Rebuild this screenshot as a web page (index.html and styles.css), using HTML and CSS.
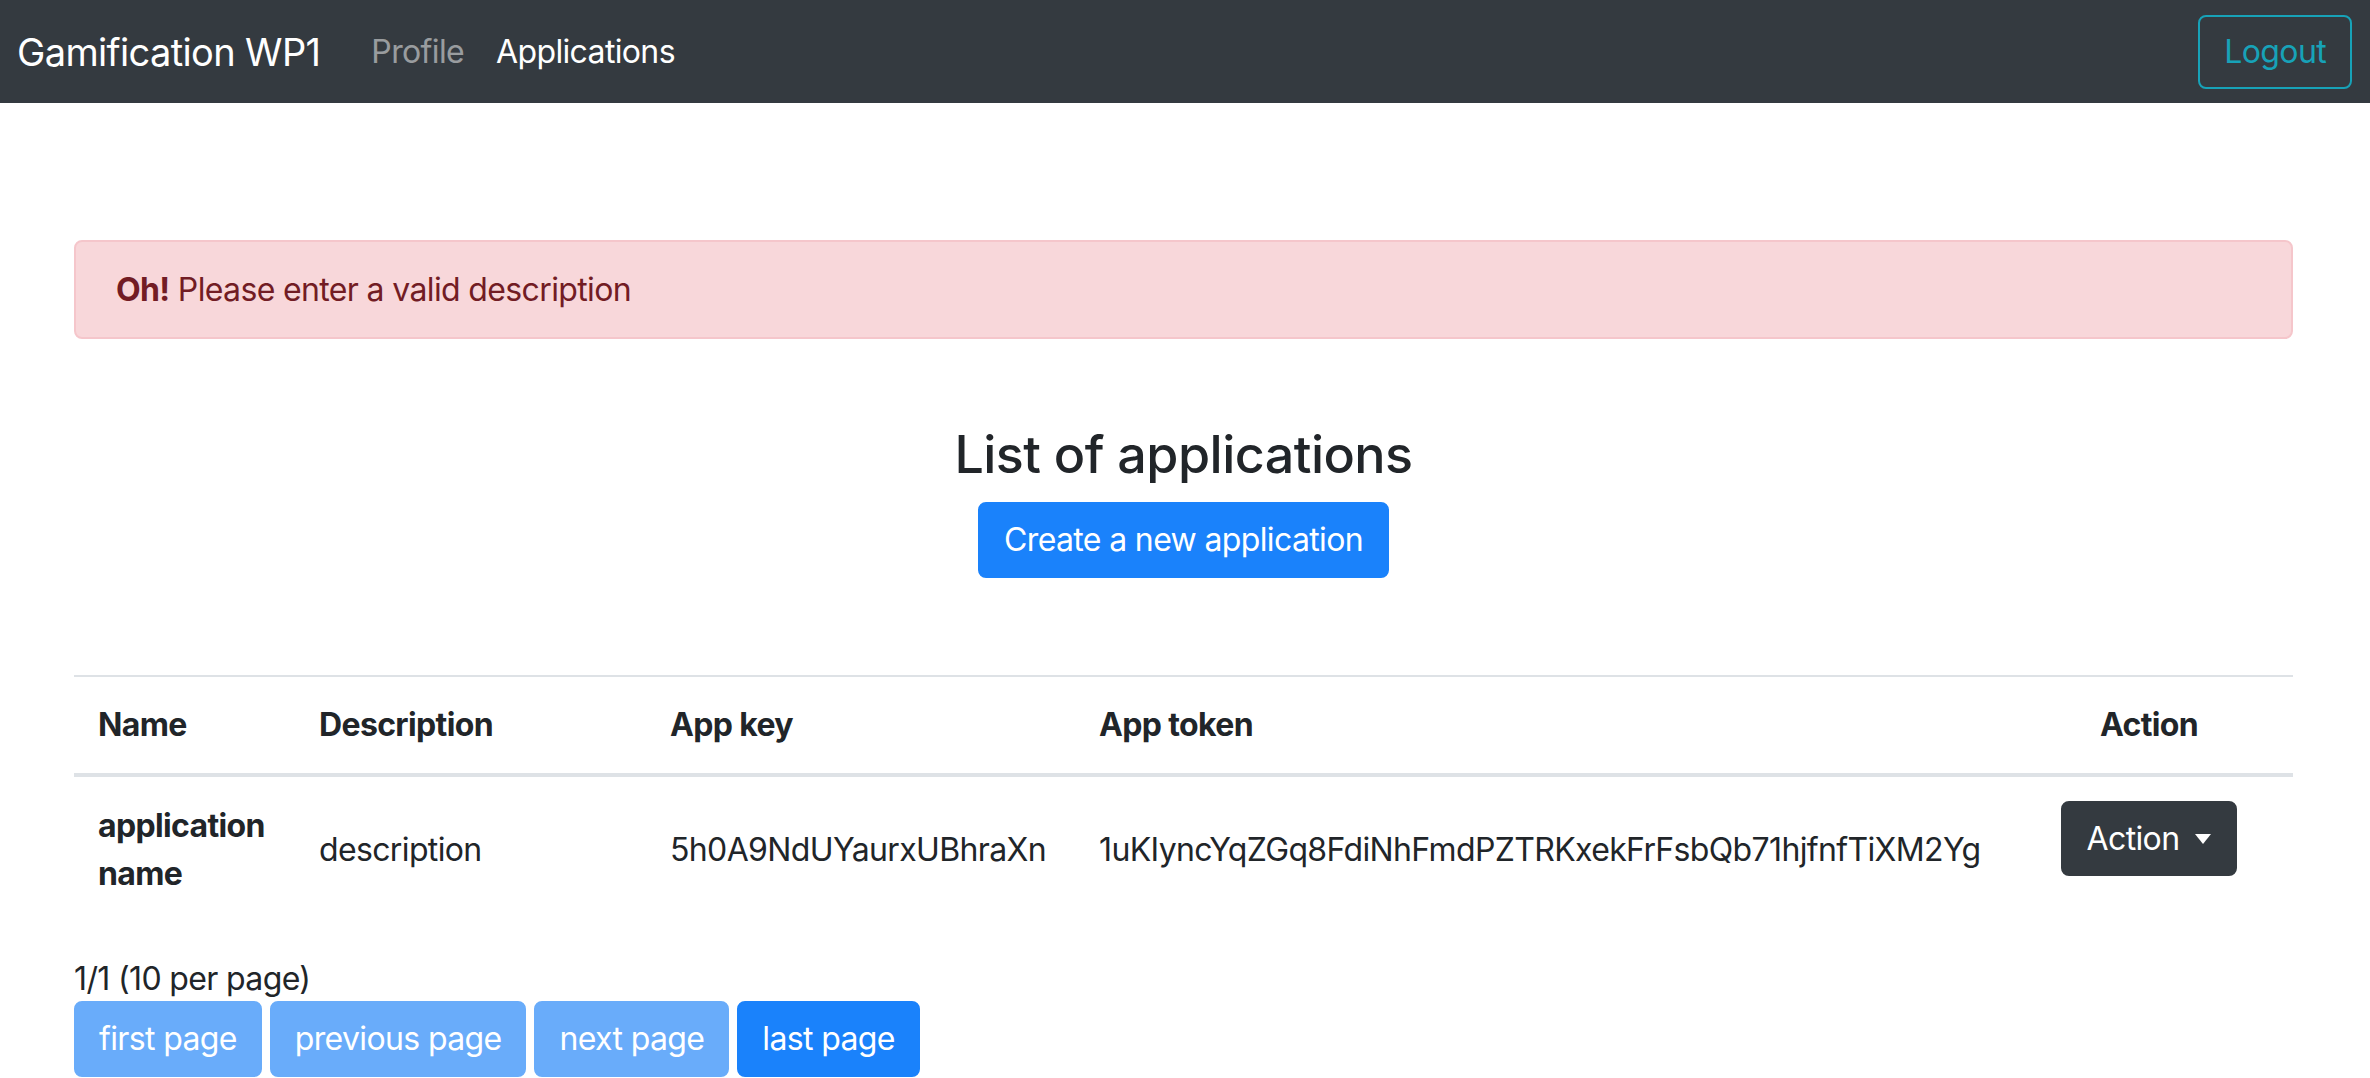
FILE: index.html
```html
<!DOCTYPE html>
<html lang="en">
<head>
<meta charset="utf-8">
<title>Gamification WP1</title>
<link rel="stylesheet" href="styles.css">
</head>
<body>
<nav class="navbar">
  <a class="brand" href="#">Gamification WP1</a>
  <ul class="nav">
    <li><a class="nav-link" href="#">Profile</a></li>
    <li><a class="nav-link active" href="#">Applications</a></li>
  </ul>
  <button class="btn btn-outline-info">Logout</button>
</nav>
<main class="container">
  <div class="alert"><strong>Oh!</strong> Please enter a valid description</div>
  <h2 class="title">List of applications</h2>
  <div class="center">
    <button class="btn btn-primary">Create a new application</button>
  </div>
  <table class="table">
    <colgroup>
      <col class="c-name">
      <col class="c-desc">
      <col class="c-key">
      <col class="c-token">
      <col class="c-action">
    </colgroup>
    <thead>
      <tr>
        <th>Name</th>
        <th>Description</th>
        <th>App key</th>
        <th>App token</th>
        <th class="tc">Action</th>
      </tr>
    </thead>
    <tbody>
      <tr>
        <th class="row-name">application name</th>
        <td>description</td>
        <td>5h0A9NdUYaurxUBhraXn</td>
        <td>1uKIyncYqZGq8FdiNhFmdPZTRKxekFrFsbQb71hjfnfTiXM2Yg</td>
        <td class="tc"><button class="btn btn-dark dropdown-toggle">Action</button></td>
      </tr>
    </tbody>
  </table>
  <p class="pager-info">1/1 (10 per page)</p>
  <div class="pager">
    <button class="btn btn-primary disabled">first page</button>
    <button class="btn btn-primary disabled">previous page</button>
    <button class="btn btn-primary disabled">next page</button>
    <button class="btn btn-primary">last page</button>
  </div>
</main>
</body>
</html>
```

FILE: styles.css
```css
* { box-sizing: border-box; }

html, body {
  margin: 0;
  padding: 0;
  background: #ffffff;
}

body {
  font-family: Inter, "Noto Sans", Roboto, sans-serif;
  font-size: 32px;
  line-height: 48px;
  letter-spacing: -0.02em;
  color: #212529;
  overflow: hidden;
}

.navbar {
  display: flex;
  align-items: center;
  height: 103px;
  padding: 0 18px 0 17px;
  background: #343a40;
}

.brand {
  color: #ffffff;
  text-decoration: none;
  font-size: 38px;
  line-height: 60px;
  margin-right: 35px;
}

.nav {
  display: flex;
  list-style: none;
  margin: 0;
  padding: 0;
}

.nav-link {
  display: block;
  padding: 0 16px;
  color: rgba(255, 255, 255, 0.5);
  text-decoration: none;
  font-size: 32px;
}

.nav-link.active {
  color: #ffffff;
}

.btn {
  font-family: inherit;
  font-size: 32px;
  line-height: 48px;
  letter-spacing: -0.02em;
  padding: 12px 24px;
  border: 2px solid transparent;
  border-radius: 8px;
  cursor: pointer;
  font-weight: 400;
}

.btn-outline-info {
  margin-left: auto;
  color: #17a2b8;
  border-color: #17a2b8;
  background: transparent;
  height: 74px;
  padding: 0 24px;
}

.container {
  padding: 0 77px 0 74px;
}

.alert {
  margin-top: 137px;
  padding: 24px 40px;
  height: 99px;
  background: #f8d7da;
  border: 2px solid #f5c6cb;
  border-radius: 8px;
  color: #721c24;
}

.alert strong {
  font-weight: 700;
}

.title {
  margin: 78px 0 9px;
  text-align: center;
  font-size: 52px;
  line-height: 76px;
  letter-spacing: -0.01em;
  font-weight: 500;
}

.center {
  display: flex;
  justify-content: center;
}

.btn-primary {
  color: #ffffff;
  background: #1a82fb;
  border-color: #1a82fb;
}

.btn-primary.disabled {
  background: #69acfa;
  border-color: #69acfa;
  cursor: default;
}

.table {
  width: 100%;
  margin-top: 97px;
  border-collapse: collapse;
  table-layout: fixed;
}

.c-name { width: 221px; }
.c-desc { width: 351px; }
.c-key { width: 429px; }
.c-token { width: 930px; }
.c-action { width: 288px; }

.table th,
.table td {
  padding: 24px;
  text-align: left;
  vertical-align: middle;
  border-top: 2px solid #dee2e6;
}

.table thead th {
  font-weight: 700;
  border-bottom: 4px solid #dee2e6;
}

.table tbody th,
.table tbody td {
  border-top: none;
}

.table .row-name {
  font-weight: 700;
}

.table .tc {
  text-align: center;
}

.btn-dark {
  color: #ffffff;
  background: #343a40;
  border-color: #343a40;
  height: 75px;
  margin-bottom: 22px;
}

.dropdown-toggle::after {
  content: "";
  display: inline-block;
  margin-left: 16px;
  vertical-align: 6px;
  border-top: 10px solid #ffffff;
  border-left: 8px solid transparent;
  border-right: 8px solid transparent;
}

.pager-info {
  margin: 35px 0 0;
  line-height: 44px;
}

.pager {
  display: flex;
  gap: 8px;
}

.pager .btn {
  height: 76px;
  padding: 12px 23px;
}
```
